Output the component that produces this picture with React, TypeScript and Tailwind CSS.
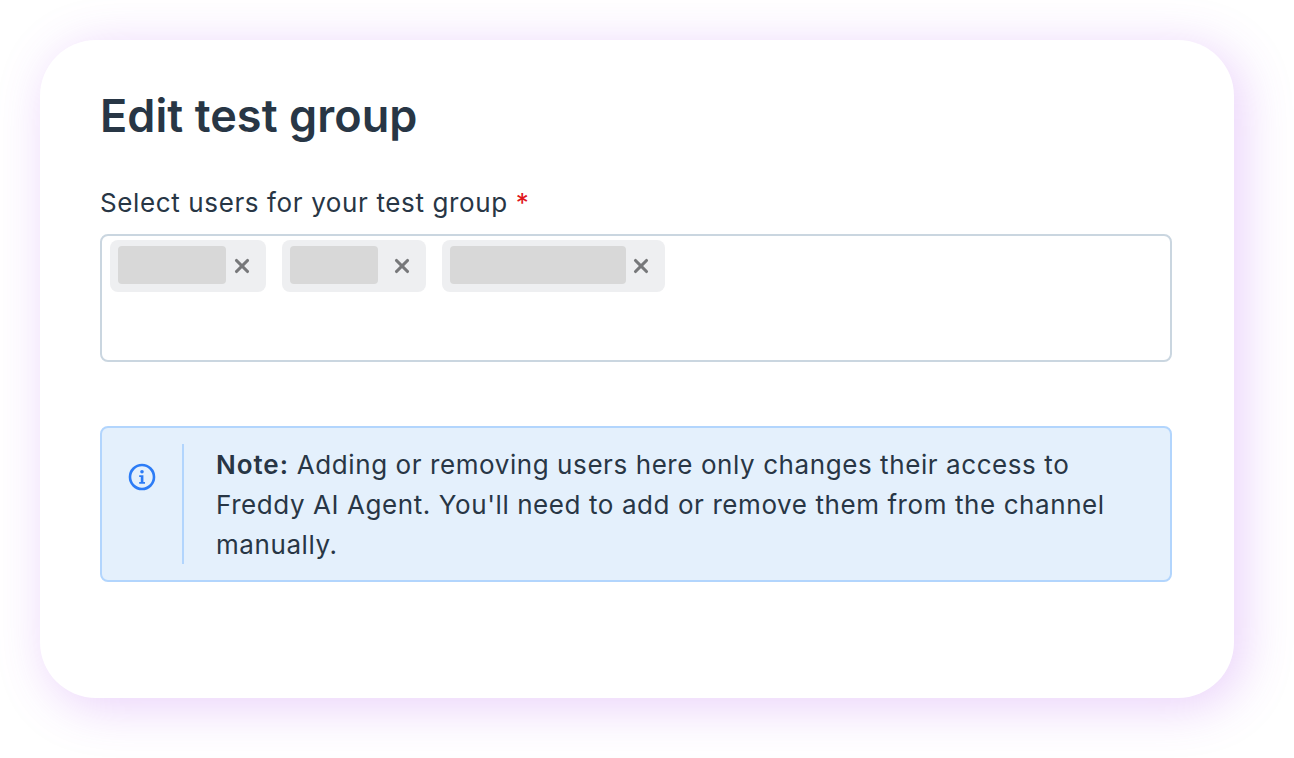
import { X } from 'lucide-react'

const chips = [
  { id: 'a', width: 'w-[108px]', gap: 'gap-[5px]' },
  { id: 'b', width: 'w-[88px]', gap: 'gap-[13px]' },
  { id: 'c', width: 'w-[176px]', gap: 'gap-[4px]' },
]

function InfoIcon() {
  return (
    <svg width="28" height="28" viewBox="0 0 28 28" fill="none" aria-hidden>
      <circle cx="14" cy="14" r="12" stroke="#2c7cf6" strokeWidth="2.6" />
      <circle cx="14" cy="8.8" r="1.8" fill="#2c7cf6" />
      <path d="M11.2 12.2h4.2v6.8h1.6v1.8h-5.8V19h1.6v-5h-1.6z" fill="#2c7cf6" />
    </svg>
  )
}

export default function App() {
  return (
    <div className="min-h-screen bg-white p-10 font-['Inter',sans-serif] text-[#283645]">
      <div className="h-[658px] w-[1194px] rounded-[56px] bg-white px-[60px] pt-[44px] shadow-[8px_8px_50px_rgba(170,70,235,0.26)]">
        <h1 className="text-[45px] leading-[64px] font-semibold tracking-[0.07px]">Edit test group</h1>
        <div className="mt-[35px] text-[26px] leading-[40px] tracking-[0.62px]">
          Select users for your test group <span className="text-[#e0161b]">*</span>
        </div>
        <div className="mt-[11px] flex h-[128px] w-[1072px] items-start gap-4 rounded-lg border-2 border-[#cad6e0] px-2 py-1">
          {chips.map((chip) => (
            <div key={chip.id} className={`flex h-[52px] items-start rounded-lg bg-[#eeeff1] pt-[6px] pr-[13px] pl-2 ${chip.gap}`}>
              <div className={`h-[38px] rounded bg-[#d8d8d8] ${chip.width}`} />
              <X size={22} strokeWidth={3.4} className="mt-[9px] text-[#77787a]" />
            </div>
          ))}
        </div>
        <div className="mt-[64px] flex h-[156px] w-[1072px] rounded-lg border-2 border-[#b2d5fd] bg-[#e4f0fc] py-4">
          <div className="flex w-[82px] shrink-0 border-r-2 border-[#b2d5fd] pt-[19px] pl-[26px]">
            <InfoIcon />
          </div>
          <p className="pt-[1px] pr-10 pl-[32px] text-[26px] leading-10 tracking-[0.58px]">
            <b className="font-semibold tracking-[0.95px]">Note:</b> Adding or removing users here only changes their access to Freddy AI Agent. You'll need to add or remove them from the channel manually.
          </p>
        </div>
      </div>
    </div>
  )
}
